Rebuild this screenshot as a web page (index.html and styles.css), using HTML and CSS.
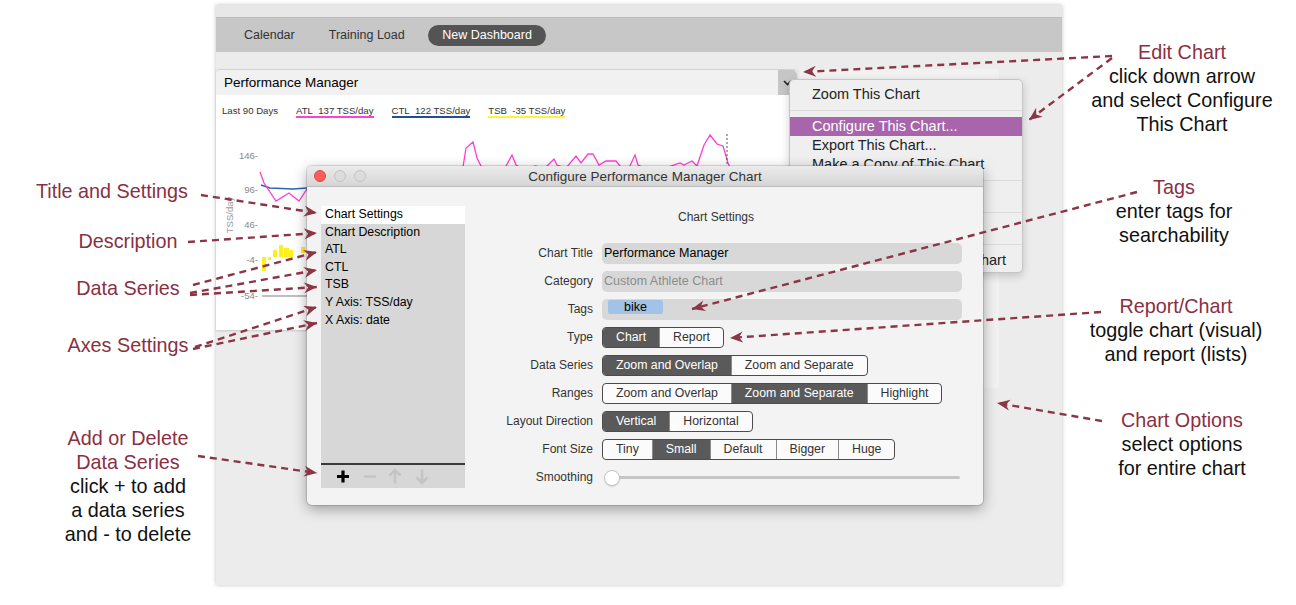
FILE: index.html
```html
<!DOCTYPE html>
<html lang="en">
<head>
    <meta charset="UTF-8">
    <title>Configure Performance Manager Chart</title>
    <link rel="stylesheet" href="styles.css">
</head>
<body>
    <div class="page">
        <aside class="notes notes-left">
            <div class="note note-title-settings"><span class="hl">Title and Settings</span></div>
            <div class="note note-desc"><span class="hl">Description</span></div>
            <div class="note note-series"><span class="hl">Data Series</span></div>
            <div class="note note-axes"><span class="hl">Axes Settings</span></div>
            <div class="note note-add">
                <span class="hl">Add or Delete</span><br>
                <span class="hl">Data Series</span><br>
                click + to add<br>
                a data series<br>
                and - to delete
            </div>
        </aside>

        <div class="app">
            <div class="app-top"></div>
            <nav class="tabs">
                <span class="tab">Calendar</span>
                <span class="tab">Training Load</span>
                <span class="tab active">New Dashboard</span>
            </nav>

            <div class="dash">
                <section class="chart">
                    <div class="chart-head">
                        <span class="chart-name">Performance Manager</span>
                        <span class="chart-drop">
                            <svg width="9" height="6" viewBox="0 0 9 6"><path d="M1 1 L4.5 4.5 L8 1" fill="none" stroke="#222" stroke-width="1.6"/></svg>
                        </span>
                    </div>
                    <div class="chart-body">
                        <div class="legend">
                            <span class="leg">Last 90 Days</span>
                            <span class="leg leg-atl">ATL&nbsp; 137 TSS/day</span>
                            <span class="leg leg-ctl">CTL&nbsp; 122 TSS/day</span>
                            <span class="leg leg-tsb">TSB&nbsp; -35 TSS/day</span>
                        </div>
                        <svg class="plot" width="581" height="205" viewBox="0 0 581 205">
                            <g transform="translate(-216 -125)">
                                <g class="ylabels">
                                    <text x="258" y="159">146-</text>
                                    <text x="258" y="193">96-</text>
                                    <text x="258" y="228">46-</text>
                                    <text x="258" y="263">-4-</text>
                                    <text x="258" y="299">-54-</text>
                                </g>
                                <text class="yunit" transform="translate(233 215) rotate(-90)" text-anchor="middle">TSS/day</text>
                                <line x1="262" y1="296" x2="320" y2="296" stroke="#aaa" stroke-width="1.5"/>
                                <g fill="#ffef1a">
                                    <rect x="262" y="257" width="4" height="14"/>
                                    <rect x="268" y="257" width="3" height="3"/>
                                    <rect x="273" y="250" width="4" height="7"/>
                                    <rect x="279" y="245" width="4" height="12"/>
                                    <rect x="284" y="248" width="5" height="9"/>
                                    <rect x="289" y="250" width="4" height="7"/>
                                    <rect x="301" y="247" width="4" height="6"/>
                                </g>
                                <polyline fill="none" stroke="#2f62b0" stroke-width="1.5" points="261,185 270,188 293,189 307,188 400,180 500,175 600,172 700,170 790,171"/>
                                <polyline fill="none" stroke="#ff3fd6" stroke-width="1.3" points="260,172 264,183 276,201 289,193 299,201 307,189 330,185 350,190 380,178 410,186 440,180 455,170 463,167 466,148 473,142 477,158 481,166 495,172 505,168 512,155 516,165 525,170 535,166 545,168 554,159 557,165 566,168 576,156 581,163 588,154 593,154 599,165 606,161 616,161 620,166 628,170 635,155 638,165 650,170 665,168 680,163 684,165 692,161 697,166 704,145 710,135 717,144 723,146 728,163 735,180"/>
                                <line x1="727" y1="134" x2="727" y2="170" stroke="#555" stroke-width="1" stroke-dasharray="2 2"/>
                            </g>
                        </svg>
                    </div>
                </section>
                <div class="tile-side"></div>

                <div class="menu">
                    <div class="menu-item">Zoom This Chart</div>
                    <div class="menu-sep"></div>
                    <div class="menu-item selected">Configure This Chart...</div>
                    <div class="menu-item">Export This Chart...</div>
                    <div class="menu-item">Make a Copy of This Chart</div>
                    <div class="menu-sep"></div>
                    <div class="menu-item">Export Chart Data...</div>
                    <div class="menu-sep"></div>
                    <div class="menu-item">Print This Chart...</div>
                    <div class="menu-sep"></div>
                    <div class="menu-item">Show Data Table for the Chart</div>
                </div>

                <div class="dialog">
                    <div class="dlg-bar">
                        <div class="lights">
                            <span class="light red"></span>
                            <span class="light"></span>
                            <span class="light"></span>
                        </div>
                        <div class="dlg-title">Configure Performance Manager Chart</div>
                    </div>
                    <div class="dlg-body">
                        <div class="series">
                            <ul class="series-list">
                                <li class="sel">Chart Settings</li>
                                <li>Chart Description</li>
                                <li>ATL</li>
                                <li>CTL</li>
                                <li>TSB</li>
                                <li>Y Axis: TSS/day</li>
                                <li>X Axis: date</li>
                            </ul>
                            <div class="series-tools">
                                <svg width="144" height="23" viewBox="0 0 144 23">
                                    <path d="M22 5.5 V17.5 M16 11.5 H28" stroke="#000" stroke-width="3.2"/>
                                    <path d="M43 11.5 H55" stroke="#c4c4c4" stroke-width="2.4"/>
                                    <path d="M74 18.5 V5 M68.5 10.5 L74 5 L79.5 10.5" fill="none" stroke="#c4c4c4" stroke-width="2.6"/>
                                    <path d="M101 4.5 V18 M95.5 12.5 L101 18 L106.5 12.5" fill="none" stroke="#c4c4c4" stroke-width="2.6"/>
                                </svg>
                            </div>
                        </div>

                        <div class="settings">
                            <div class="settings-head">Chart Settings</div>
                            <div class="form">
                                <label>Chart Title</label>
                                <div class="field">Performance Manager</div>

                                <label>Category</label>
                                <div class="field placeholder">Custom Athlete Chart</div>

                                <label>Tags</label>
                                <div class="field"><span class="tag">bike</span></div>

                                <label>Type</label>
                                <div><span class="seg"><span class="on">Chart</span><span>Report</span></span></div>

                                <label>Data Series</label>
                                <div><span class="seg"><span class="on">Zoom and Overlap</span><span>Zoom and Separate</span></span></div>

                                <label>Ranges</label>
                                <div><span class="seg"><span>Zoom and Overlap</span><span class="on">Zoom and Separate</span><span>Highlight</span></span></div>

                                <label>Layout Direction</label>
                                <div><span class="seg"><span class="on">Vertical</span><span>Horizontal</span></span></div>

                                <label>Font Size</label>
                                <div><span class="seg"><span>Tiny</span><span class="on">Small</span><span>Default</span><span>Bigger</span><span>Huge</span></span></div>

                                <label>Smoothing</label>
                                <div class="slider"><span class="knob"></span><span class="track"></span></div>
                            </div>
                        </div>
                    </div>
                </div>
            </div>
        </div>

        <aside class="notes notes-right">
            <div class="note note-edit">
                <span class="hl">Edit Chart</span><br>
                click down arrow<br>
                and select Configure<br>
                This Chart
            </div>
            <div class="note note-tags">
                <span class="hl">Tags</span><br>
                enter tags for<br>
                searchability
            </div>
            <div class="note note-report">
                <span class="hl">Report/Chart</span><br>
                toggle chart (visual)<br>
                and report (lists)
            </div>
            <div class="note note-options">
                <span class="hl">Chart Options</span><br>
                select options<br>
                for entire chart
            </div>
        </aside>
    </div>

    <!-- callout arrows drawn over the screenshot -->
    <svg class="arrows" width="1296" height="605" viewBox="0 0 1296 605">
        <defs>
            <marker id="head" markerUnits="userSpaceOnUse" markerWidth="14" markerHeight="12" refX="13" refY="5.5" orient="auto">
                <path d="M0 0 L13 5.5 L0 11 L4 5.5 Z" fill="#8b3546"/>
            </marker>
        </defs>
        <g stroke="#8b3546" stroke-width="2.4" stroke-dasharray="7 5" fill="none" marker-end="url(#head)">
            <line x1="1112" y1="56" x2="803" y2="72"/>
            <line x1="1112" y1="58" x2="1029" y2="120"/>
            <line x1="1137" y1="192" x2="692" y2="309"/>
            <line x1="1101" y1="312" x2="730" y2="338"/>
            <line x1="1102" y1="421" x2="997" y2="403"/>
            <line x1="201" y1="195" x2="317" y2="213"/>
            <line x1="188" y1="242" x2="317" y2="233"/>
            <line x1="193" y1="285" x2="317" y2="252"/>
            <line x1="190" y1="293" x2="317" y2="270"/>
            <line x1="190" y1="295" x2="317" y2="287"/>
            <line x1="195" y1="347" x2="317" y2="307"/>
            <line x1="193" y1="349" x2="317" y2="323"/>
            <line x1="198" y1="456" x2="317" y2="473"/>
        </g>
    </svg>
</body>
</html>
```

FILE: styles.css
```css
* {
    box-sizing: border-box;
}
body {
    margin: 0;
    width: 1296px;
    height: 605px;
    overflow: hidden;
    position: relative;
    background: #fff;
    font-family: "Liberation Sans", Arial, sans-serif;
}
.page {
    display: grid;
    grid-template-columns: 216px 846px 234px;
}

/* annotations */
.notes {
    font-size: 19.8px;
    line-height: 24px;
    color: #111;
    text-align: center;
    white-space: nowrap;
}
.hl {
    color: #8a3042;
}
.notes-left {
    padding: 179px 0 0 40px;
}
.note-title-settings {
    margin-left: -40px;
    text-align: right;
    padding-right: 28px;
}
.note-desc { margin-top: 26px; }
.note-series { margin-top: 23px; }
.note-axes { margin-top: 33px; }
.note-add { margin-top: 69px; }

.notes-right {
    padding-top: 40px;
}
.note-edit { padding-left: 6px; }
.note-tags { margin-top: 39px; padding-right: 10px; }
.note-report { margin-top: 47px; padding-right: 6px; }
.note-options { margin-top: 42px; padding-left: 6px; }

/* app window */
.app {
    margin-top: 5px;
    height: 580px;
    display: flex;
    flex-direction: column;
    background: #ececec;
    box-shadow: 0 0 4px rgba(0,0,0,0.25);
}
.app-top {
    height: 12px;
    background: #e7e7e7;
}
.tabs {
    height: 35px;
    background: #c7c7c7;
    border-top: 1px solid #bdbdbd;
    display: flex;
    align-items: center;
    gap: 6px;
    padding-left: 14px;
    font-size: 12.5px;
    color: #333;
}
.tab {
    padding: 0 14px;
    line-height: 21px;
}
.tab.active {
    margin-left: 3px;
    background: #545454;
    color: #fff;
    border-radius: 11px;
    padding: 0 14.5px;
}
.dash {
    flex: 1;
    position: relative;
    display: flex;
    align-items: flex-start;
    padding-top: 17px;
}

/* chart tile */
.chart {
    width: 581px;
    box-shadow: 0 1px 2px rgba(0,0,0,0.15);
}
.chart-head {
    height: 26px;
    background: #f1f1f1;
    border-top: 1px solid #d3d3d3;
    border-radius: 4px 4px 0 0;
    display: flex;
    align-items: center;
}
.chart-name {
    flex: 1;
    padding-left: 8px;
    font-size: 13.5px;
    color: #000;
}
.chart-drop {
    width: 19px;
    height: 25px;
    background: #c6c6c6;
    border-radius: 0 5px 0 0;
    display: flex;
    align-items: center;
    justify-content: center;
}
.chart-body {
    height: 235px;
    background: #fff;
}
.legend {
    height: 30px;
    padding: 10px 0 0 6px;
    display: flex;
    gap: 18px;
    font-size: 9.6px;
    color: #333;
}
.leg {
    line-height: 11px;
    height: 13px;
    border-bottom: 2px solid transparent;
}
.leg-atl { border-color: #ff3fd6; }
.leg-ctl { border-color: #1f4f9c; }
.leg-tsb { border-color: #fff23a; }
.plot {
    display: block;
}
.ylabels text {
    font-size: 9.5px;
    fill: #888;
    text-anchor: end;
}
.yunit {
    font-size: 9.5px;
    fill: #999;
}
.tile-side {
    width: 199px;
    height: 319px;
    margin-left: 3px;
    background: #f1f1f1;
}

/* popup menu */
.menu {
    position: absolute;
    left: 573px;
    top: 27px;
    width: 234px;
    height: 194px;
    padding: 5px 0 4px;
    background: #efefef;
    border: 1px solid #c6c6c6;
    border-radius: 5px;
    box-shadow: 0 3px 8px rgba(0,0,0,0.18);
    font-size: 14.5px;
    color: #222;
    overflow: hidden;
}
.menu-item {
    height: 19px;
    line-height: 19px;
    padding-left: 22px;
    white-space: nowrap;
}
.menu-item.selected {
    background: #a865ab;
    color: #fff;
}
.menu-sep {
    height: 13px;
    position: relative;
}
.menu-sep::after {
    content: "";
    position: absolute;
    left: 0;
    right: 0;
    top: 6px;
    border-top: 1px solid #dadada;
}

/* configure dialog */
.dialog {
    position: absolute;
    left: 91px;
    top: 114px;
    width: 676px;
    height: 339px;
    background: #f3f3f3;
    border-radius: 5px;
    box-shadow: 0 4px 14px rgba(0,0,0,0.35), 0 0 0 1px rgba(0,0,0,0.12);
    display: flex;
    flex-direction: column;
    overflow: hidden;
}
.dlg-bar {
    height: 21px;
    background: linear-gradient(#ebebeb, #d5d5d5);
    border-bottom: 1px solid #bcbcbc;
    display: grid;
    grid-template-columns: 1fr auto 1fr;
    align-items: center;
}
.lights {
    display: flex;
    gap: 8px;
    padding-left: 7px;
}
.light {
    width: 12px;
    height: 12px;
    border-radius: 50%;
    background: #dcdcdc;
    border: 1px solid #c2c2c2;
}
.light.red {
    background: #fc5f57;
    border-color: #df4a43;
}
.dlg-title {
    font-size: 13.5px;
    color: #333;
}
.dlg-body {
    flex: 1;
    display: flex;
    gap: 5px;
    padding: 19px 21px 17px 14px;
}
.series {
    width: 144px;
    display: flex;
    flex-direction: column;
}
.series-list {
    flex: 1;
    margin: 0;
    padding: 0;
    list-style: none;
    background: #d7d7d7;
    border-bottom: 2px solid #3a3a3a;
    font-size: 12.3px;
    color: #000;
}
.series-list li {
    height: 17.6px;
    line-height: 17.6px;
    padding-left: 4px;
}
.series-list li.sel {
    background: #fff;
}
.series-tools {
    height: 23px;
    background: #d7d7d7;
}
.series-tools svg {
    display: block;
}
.settings {
    flex: 1;
}
.settings-head {
    height: 22px;
    line-height: 22px;
    text-align: center;
    font-size: 12px;
    color: #333;
    margin-bottom: 15px;
}
.form {
    display: grid;
    grid-template-columns: 123px 360px;
    grid-auto-rows: 21px;
    column-gap: 9px;
    row-gap: 7px;
}
.form label {
    text-align: right;
    line-height: 21px;
    font-size: 12px;
    color: #333;
}
.field {
    background: #d8d8d8;
    border-radius: 5px;
    padding-left: 2px;
    line-height: 21px;
    font-size: 12.5px;
    color: #000;
}
.field.placeholder {
    color: #8c8c8c;
}
.tag {
    display: inline-block;
    vertical-align: top;
    margin: 1px 0 0 4px;
    width: 55px;
    height: 14px;
    line-height: 14px;
    text-align: center;
    background: #a3c2e8;
    border-radius: 2px;
}
.seg {
    display: inline-flex;
    height: 21px;
    border: 1px solid #4c4c4c;
    border-radius: 4px;
    overflow: hidden;
    font-size: 12.3px;
    color: #333;
    background: #fbfbfb;
}
.seg span {
    padding: 0 13px;
    line-height: 19px;
}
.seg span + span {
    border-left: 1px solid #8a8a8a;
}
.seg .on {
    background: #5a5a5a;
    color: #fff;
}
.slider {
    display: flex;
    align-items: center;
    padding-left: 2px;
}
.knob {
    width: 16px;
    height: 16px;
    border-radius: 50%;
    background: #fff;
    border: 1px solid #c4c4c4;
    box-shadow: 0 1px 1px rgba(0,0,0,0.1);
    position: relative;
    z-index: 1;
}
.track {
    width: 348px;
    height: 3px;
    margin-left: -8px;
    background: #c6c6c6;
    border-radius: 2px;
}

.arrows {
    position: absolute;
    left: 0;
    top: 0;
    pointer-events: none;
}
```
